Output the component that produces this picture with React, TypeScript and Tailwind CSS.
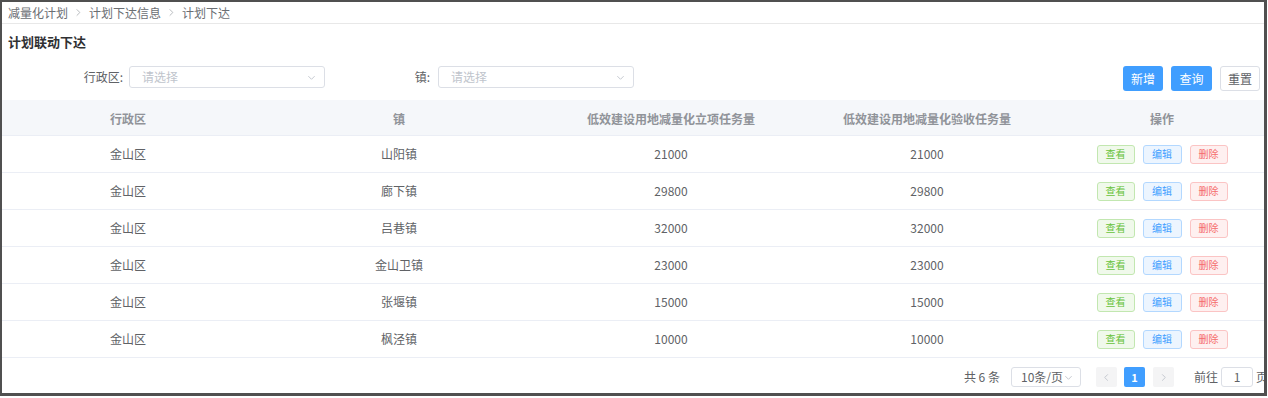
import React from "react";

const rows = [
  ["金山区", "山阳镇", "21000", "21000"],
  ["金山区", "廊下镇", "29800", "29800"],
  ["金山区", "吕巷镇", "32000", "32000"],
  ["金山区", "金山卫镇", "23000", "23000"],
  ["金山区", "张堰镇", "15000", "15000"],
  ["金山区", "枫泾镇", "10000", "10000"],
];

const Chevron = () => (
  <svg width="9" height="9" viewBox="0 0 10 10" fill="none">
    <path d="M1.5 3.5 L5 7 L8.5 3.5" stroke="#c0c4cc" strokeWidth="1" />
  </svg>
);

const Sep = () => (
  <svg width="7" height="9" viewBox="0 0 7 10" fill="none" className="mx-[7px]">
    <path d="M1.5 1.5 L5 5 L1.5 8.5" stroke="#b0b3b8" strokeWidth="1" />
  </svg>
);

export default function App() {
  const grid = "grid grid-cols-[252px_290px_254px_258px_212px]";
  return (
    <div
      className="w-[1267px] h-[396px] border-l-2 border-t-2 border-r-[3px] border-b-[3px] border-[#505050] bg-white overflow-hidden flex flex-col text-[12px] text-[#606266]"
      style={{ fontFamily: '"Noto Sans CJK SC", "Noto Sans", sans-serif' }}
    >
      <div className="h-[22px] shrink-0 border-b border-[#e8e8e8] flex items-center pl-[6px] text-[12px] text-[#6b6e73]">
        <span>减量化计划</span>
        <Sep />
        <span>计划下达信息</span>
        <Sep />
        <span>计划下达</span>
      </div>
      <div className="h-[35px] shrink-0 flex items-center pl-[6px] text-[13px] font-bold text-[#303133]">
        计划联动下达
      </div>
      <div className="mt-[7px] h-[25px] shrink-0 flex items-start">
        <div className="w-[121px] h-[22px] flex items-center justify-end text-[12px] text-[#606266]">行政区:</div>
        <div className="ml-[6px] w-[196px] h-[22px] border border-[#dcdfe6] rounded-[3px] flex items-center justify-between pl-[12px] pr-[8px] text-[#c0c4cc]">
          <span>请选择</span>
          <Chevron />
        </div>
        <div className="w-[105px] h-[22px] flex items-center justify-end text-[#606266]">镇:</div>
        <div className="ml-[8px] w-[196px] h-[22px] border border-[#dcdfe6] rounded-[3px] flex items-center justify-between pl-[12px] pr-[8px] text-[#c0c4cc]">
          <span>请选择</span>
          <Chevron />
        </div>
        <div className="ml-auto mr-[4px] flex gap-[8px]">
          <button className="w-[40px] h-[25px] rounded-[3px] bg-[#409eff] text-white text-[12px]">新增</button>
          <button className="w-[41px] h-[25px] rounded-[3px] bg-[#409eff] text-white text-[12px]">查询</button>
          <button className="w-[40px] h-[25px] rounded-[3px] bg-white border border-[#dcdfe6] text-[#606266] text-[12px]">重置</button>
        </div>
      </div>
      <div className="mt-[9px] shrink-0">
        <div className={`${grid} h-[36px] pt-[2px] bg-[#f5f7fa] border-b border-[#ebeef5] items-center text-center font-bold text-[#909399]`}>
          <div>行政区</div>
          <div>镇</div>
          <div>低效建设用地减量化立项任务量</div>
          <div>低效建设用地减量化验收任务量</div>
          <div>操作</div>
        </div>
        {rows.map((r, i) => (
          <div key={i} className={`${grid} h-[37px] border-b border-[#ebeef5] items-center text-center text-[#606266]`}>
            <div>{r[0]}</div>
            <div>{r[1]}</div>
            <div>{r[2]}</div>
            <div>{r[3]}</div>
            <div className="flex justify-center gap-[8px]">
              <button className="w-[38px] h-[19px] rounded-[3px] border border-[#c2e7b0] bg-[#f0f9eb] text-[#67c23a] text-[10px] leading-none">查看</button>
              <button className="w-[39px] h-[19px] rounded-[3px] border border-[#b3d8ff] bg-[#ecf5ff] text-[#409eff] text-[10px] leading-none">编辑</button>
              <button className="w-[38px] h-[19px] rounded-[3px] border border-[#fbc4c4] bg-[#fef0f0] text-[#f56c6c] text-[10px] leading-none">删除</button>
            </div>
          </div>
        ))}
      </div>
      <div className="mt-[9px] h-[20px] shrink-0 flex items-center justify-end mr-[-4px] text-[12px] text-[#606266]">
        <span>共 6 条</span>
        <div className="ml-[11px] w-[70px] h-[20px] border border-[#dcdfe6] rounded-[3px] flex items-center justify-between pl-[9px] pr-[7px]">
          <span>10条/页</span>
          <Chevron />
        </div>
        <div className="ml-[15px] w-[21px] h-[20px] bg-[#f4f4f5] rounded-[2px] flex items-center justify-center">
          <svg width="7" height="9" viewBox="0 0 7 10" fill="none"><path d="M5 1.5 L1.5 5 L5 8.5" stroke="#c0c4cc" strokeWidth="1" /></svg>
        </div>
        <div className="ml-[7px] w-[21px] h-[20px] bg-[#409eff] rounded-[2px] flex items-center justify-center text-white font-bold text-[11px]">1</div>
        <div className="ml-[8px] w-[21px] h-[20px] bg-[#f4f4f5] rounded-[2px] flex items-center justify-center">
          <svg width="7" height="9" viewBox="0 0 7 10" fill="none"><path d="M2 1.5 L5.5 5 L2 8.5" stroke="#c0c4cc" strokeWidth="1" /></svg>
        </div>
        <span className="ml-[20px]">前往</span>
        <div className="ml-[3px] w-[32px] h-[20px] border border-[#dcdfe6] rounded-[3px] flex items-center justify-center">1</div>
        <span className="ml-[3px]">页</span>
      </div>
    </div>
  );
}
